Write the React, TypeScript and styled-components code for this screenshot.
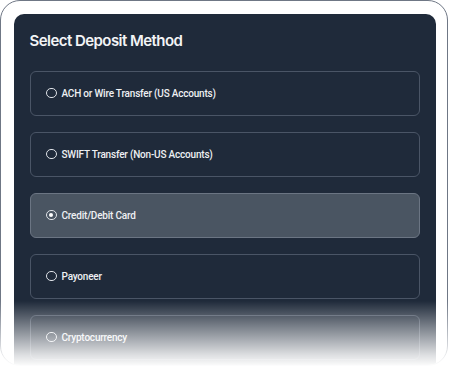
import React, { useState } from "react";
import styled, { createGlobalStyle } from "styled-components";

const Global = createGlobalStyle`
  html, body { margin: 0; padding: 0; background: #ffffff; }
  body { font-family: Inter, "Noto Sans", sans-serif; -webkit-font-smoothing: antialiased; }
`;

const Page = styled.div`
  position: relative;
  width: 450px;
  height: 367px;
  overflow: hidden;
  background: #ffffff;
`;

const Frame = styled.div`
  box-sizing: border-box;
  width: 448px;
  height: 366px;
  border: 1.5px solid #6f7785;
  border-radius: 20px;
  padding: 12.5px 10.5px 0 12.5px;
  overflow: hidden;
  background: #ffffff;
`;

const Panel = styled.section`
  box-sizing: border-box;
  width: 422px;
  height: 380px;
  background: #1f2a3a;
  border-radius: 10px;
  padding: 17px 16px 0 16px;
  display: flex;
  flex-direction: column;
`;

const Title = styled.h2`
  margin: 0 0 20px 0;
  font-size: 15px;
  line-height: 20px;
  font-weight: 600;
  color: #f3f4f6;
  letter-spacing: -0.55px;
`;

const List = styled.div`
  display: flex;
  flex-direction: column;
  gap: 16px;
`;

const Option = styled.button<{ $selected: boolean }>`
  box-sizing: border-box;
  height: 45px;
  width: 100%;
  display: flex;
  align-items: center;
  gap: 5px;
  padding: 0 0 0 15.5px;
  border-radius: 6px;
  border: 1px solid ${(p) => (p.$selected ? "#6b7583" : "#4a5566")};
  background: ${(p) => (p.$selected ? "#4a5562" : "transparent")};
  cursor: pointer;
  font-family: inherit;
  text-align: left;
`;

const Radio = styled.span<{ $selected: boolean }>`
  box-sizing: border-box;
  width: 10.5px;
  height: 10.5px;
  border-radius: 50%;
  border: 1px solid #dfe3e8;
  display: flex;
  align-items: center;
  justify-content: center;
  flex-shrink: 0;
  &::after {
    content: "";
    width: 4px;
    height: 4px;
    border-radius: 50%;
    background: #ffffff;
    display: ${(p) => (p.$selected ? "block" : "none")};
  }
`;

const Label = styled.span`
  font-family: Roboto, "Noto Sans", sans-serif;
  font-size: 10px;
  font-weight: 500;
  color: #eef0f3;
  letter-spacing: -0.2px;
`;

const Fade = styled.div`
  position: absolute;
  left: 0;
  right: 0;
  bottom: 0;
  height: 66px;
  background: linear-gradient(
    to bottom,
    rgba(255, 255, 255, 0) 0%,
    rgba(255, 255, 255, 0.42) 40%,
    rgba(255, 255, 255, 0.85) 82%,
    rgba(255, 255, 255, 1) 100%
  );
  pointer-events: none;
`;

const methods = [
  "ACH or Wire Transfer (US Accounts)",
  "SWIFT Transfer (Non-US Accounts)",
  "Credit/Debit Card",
  "Payoneer",
  "Cryptocurrency",
];

export default function App() {
  const [selected, setSelected] = useState(2);
  return (
    <Page>
      <Global />
      <Frame>
        <Panel>
          <Title>Select Deposit Method</Title>
          <List>
            {methods.map((m, i) => (
              <Option key={m} $selected={i === selected} onClick={() => setSelected(i)}>
                <Radio $selected={i === selected} />
                <Label>{m}</Label>
              </Option>
            ))}
          </List>
        </Panel>
      </Frame>
      <Fade />
    </Page>
  );
}
